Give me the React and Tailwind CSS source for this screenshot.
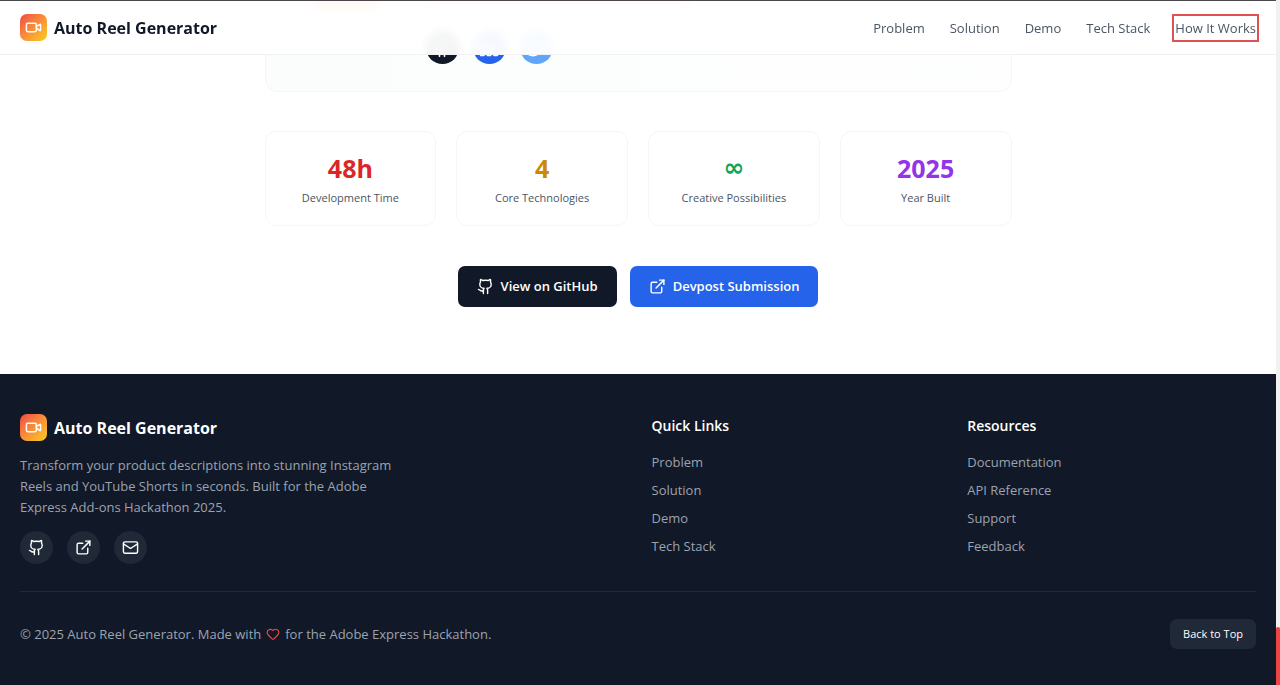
import React from 'react';
import { ExternalLink, Github, Heart, Linkedin, Mail, Twitter, Video } from 'lucide-react';

const navLinks = ['Problem', 'Solution', 'Demo', 'Tech Stack'];

const stats = [
  { value: '48h', label: 'Development Time', color: 'text-[#dc2626]' },
  { value: '4', label: 'Core Technologies', color: 'text-[#ca8a04]' },
  { value: '∞', label: 'Creative Possibilities', color: "text-[#16a34a] font-['DejaVu_Sans',sans-serif]" },
  { value: '2025', label: 'Year Built', color: 'text-[#9333ea]' }
];

const profiles = [
  { name: 'GitHub', icon: Github, color: 'bg-[#111827]' },
  { name: 'LinkedIn', icon: Linkedin, color: 'bg-[#2563eb]' },
  { name: 'Twitter', icon: Twitter, color: 'bg-[#60a5fa]' }
];

const socials = [
  { name: 'GitHub', icon: Github },
  { name: 'Devpost', icon: ExternalLink },
  { name: 'Email', icon: Mail }
];

const footerColumns = [
  { title: 'Quick Links', links: navLinks },
  { title: 'Resources', links: ['Documentation', 'API Reference', 'Support', 'Feedback'] }
];

const Brand = () => (
  <div className="flex items-center gap-[7px]">
    <span className="w-[27px] h-[27px] rounded-[7px] bg-linear-to-br from-[#ef4444] to-[#facc15] flex items-center justify-center text-white">
      <Video className="w-[17px] h-[17px]" />
    </span>
    <span className="pt-[2px] text-base leading-[25px] font-bold">Auto Reel Generator</span>
  </div>
);

const Header = () => (
  <header className="sticky top-0 z-10 h-[55px] px-5 flex items-center justify-between bg-white/95 backdrop-blur-xs border-t border-t-[#4b474a] border-b border-b-[#f0f1f3] text-[#111827]">
    <Brand />
    <nav className="flex items-center gap-[25px] text-[13px] leading-[22px] text-[#4b5563]">
      {navLinks.map((link) => (
        <a key={link} href="#">{link}</a>
      ))}
      <a href="#" className="outline-2 outline-offset-1 outline-[#e05252]">How It Works</a>
    </nav>
  </header>
);

const Creator = () => (
  <div className="flex items-start gap-[47px] pl-[47px] pb-[27px] bg-linear-to-r from-[#fbfdfd] to-[#fefefe] border border-t-0 border-[#f5f6f7] rounded-b-[13px]">
    <div className="w-[66px] h-2 rounded-b-full bg-orange-400" />
    <div>
      <div className="w-[265px] h-[6px] bg-red-300" />
      <div className="flex gap-[14px] pt-[25px]">
        {profiles.map(({ name, icon: Icon, color }) => (
          <a
            key={name}
            href="#"
            aria-label={name}
            className={`w-[33px] h-[33px] rounded-full flex items-center justify-center text-white ${color}`}
          >
            <Icon className="w-5 h-5" />
          </a>
        ))}
      </div>
    </div>
  </div>
);

const Footer = () => (
  <footer className="bg-[#111827] px-5 pt-10 pb-9 text-[#9ca3af]">
    <div className="grid grid-cols-4 gap-[27px] pb-[27px] border-b border-[#1f2937]">
      <div className="col-span-2">
        <div className="text-white">
          <Brand />
        </div>
        <p className="mt-[14px] max-w-[373px] text-[13px] leading-[21px]">
          Transform your product descriptions into stunning Instagram Reels and YouTube Shorts in seconds. Built for the Adobe Express Add-ons Hackathon 2025.
        </p>
        <div className="flex gap-[14px] mt-[13px]">
          {socials.map(({ name, icon: Icon }) => (
            <a
              key={name}
              href="#"
              aria-label={name}
              className="w-[33px] h-[33px] rounded-full bg-[#1f2937] text-white flex items-center justify-center"
            >
              <Icon className="w-[17px] h-[17px]" />
            </a>
          ))}
        </div>
      </div>

      {footerColumns.map((column) => (
        <div key={column.title}>
          <h3 className="text-sm leading-6 font-semibold text-white">{column.title}</h3>
          <ul className="mt-[13px] space-y-[6px] text-[13px] leading-[22px]">
            {column.links.map((link) => (
              <li key={link}>
                <a href="#">{link}</a>
              </li>
            ))}
          </ul>
        </div>
      ))}
    </div>

    <div className="flex items-center justify-between pt-[27px]">
      <p className="flex items-center text-[13px] leading-[22px]">
        © 2025 Auto Reel Generator. Made with
        <Heart className="w-[14px] h-[14px] mx-[5px] text-[#ef4444]" />
        for the Adobe Express Hackathon.
      </p>
      <button className="h-[30px] px-[13px] rounded-[7px] bg-[#1f2937] text-white text-[11px] cursor-pointer">
        Back to Top
      </button>
    </div>
  </footer>
);

const App = () => {
  return (
    <div className="flex min-h-screen bg-white font-['Open_Sans','Noto_Sans',sans-serif]">
      <div className="flex-1 min-w-0">
        <Header />

        <main className="-mt-[55px] px-5 pb-[67px]">
          <div className="max-w-[747px] mx-auto">
            <Creator />

            {/* Project stats */}
            <div className="grid grid-cols-4 gap-5 mt-[39px]">
              {stats.map((stat) => (
                <div key={stat.label} className="h-[95px] pt-[21px] text-center border border-[#f5f6f7] rounded-[11px]">
                  <div className={`text-[25px] leading-[30px] font-bold ${stat.color}`}>{stat.value}</div>
                  <div className="mt-[6px] text-[11px] leading-[17px] text-[#4b5563]">{stat.label}</div>
                </div>
              ))}
            </div>

            {/* Project links */}
            <div className="flex justify-center gap-[13px] mt-10 text-[13px] leading-[21px] font-semibold text-white">
              <a href="#" className="flex items-center gap-[7px] px-[19px] py-[10px] rounded-[7px] bg-[#111827]">
                <Github className="w-[17px] h-[17px]" />
                View on GitHub
              </a>
              <a href="#" className="flex items-center gap-[7px] px-[19px] py-[10px] rounded-[7px] bg-[#2563eb]">
                <ExternalLink className="w-[17px] h-[17px]" />
                Devpost Submission
              </a>
            </div>
          </div>
        </main>

        <Footer />
      </div>

      {/* Scroll track */}
      <div className="w-1 bg-[#f1f1f1] flex flex-col justify-end">
        <div className="h-[58px] rounded-t-xs bg-[#ef4444]" />
      </div>
    </div>
  );
};

export default App;
